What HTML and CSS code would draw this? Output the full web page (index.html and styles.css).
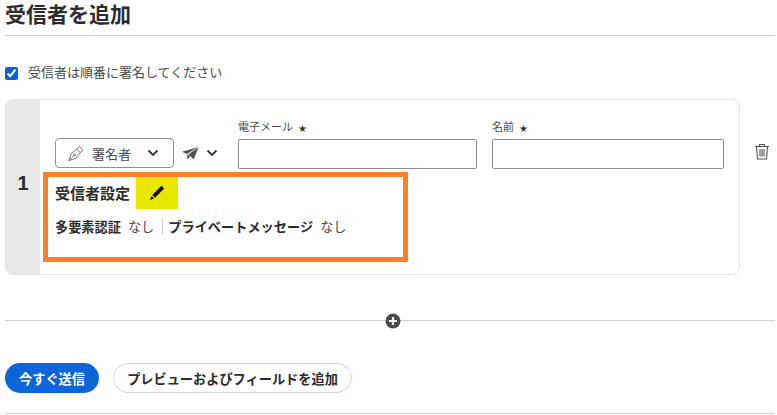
FILE: index.html
```html
<!DOCTYPE html>
<html lang="ja">
<head>
    <meta charset="UTF-8">
    <title>受信者を追加</title>
    <link rel="stylesheet" href="styles.css">
</head>
<body>
    <h1 class="title">受信者を追加</h1>
    <label class="order">
        <input type="checkbox" checked>
        <span>受信者は順番に署名してください</span>
    </label>
    <div class="recipient">
        <div class="card">
            <div class="number">1</div>
            <div class="card-body">
                <div class="fields">
                    <div class="role">
                        <svg class="pen" viewBox="0 0 18 18" width="17" height="17" fill="none" stroke="#707070" stroke-width="1">
                            <path d="M2 16.500l2.500-7.500 6-4.500 3.500 3.500-4.500 6z"/>
                            <path d="M10.500 4.500l2.500-3 4 4-3 2.500"/>
                            <path d="M2 16.500l5-5"/>
                            <circle cx="8" cy="10.500" r="1.100"/>
                        </svg>
                        <span>署名者</span>
                        <svg class="chevron" viewBox="0 0 12 8" width="12" height="8"><path d="M1.500 1.500L6 6l4.500-4.500"/></svg>
                    </div>
                    <div class="delivery">
                        <svg viewBox="0 0 18 16" width="17" height="15" fill="#505050">
                            <path d="M0 6L17.500 1 5 8.500z"/>
                            <path d="M6.500 9L17.500 1.500 12.500 14z"/>
                            <path d="M5 9l1 5.500 2.500-3.500z"/>
                        </svg>
                        <svg class="chevron" viewBox="0 0 12 8" width="12" height="8"><path d="M1.500 1.500L6 6l4.500-4.500"/></svg>
                    </div>
                    <div class="field email">
                        <label>電子メール <b>★</b></label>
                        <input type="text">
                    </div>
                    <div class="field name">
                        <label>名前 <b>★</b></label>
                        <input type="text">
                    </div>
                </div>
                <div class="settings">
                    <div class="settings-head">
                        <strong>受信者設定</strong>
                        <span class="edit">
                            <svg viewBox="0 0 16 16" width="16" height="16" fill="#111">
                                <path d="M12.500.8l2.700 2.700-9.200 9.200-2.700-2.700z"/>
                                <path d="M2.600 11l2.400 2.400-4.100 1.700z"/>
                            </svg>
                        </span>
                    </div>
                    <div class="settings-row">
                        <strong>多要素認証</strong>
                        <span class="value">なし</span>
                        <i class="sep"></i>
                        <strong>プライベートメッセージ</strong>
                        <span class="value">なし</span>
                    </div>
                </div>
            </div>
        </div>
        <svg class="trash" viewBox="0 0 16 17" width="16" height="17" fill="none" stroke="#555" stroke-width="1.100">
            <path d="M1 3.500h14"/>
            <path d="M5.500 3.500V1.500h5v2"/>
            <path d="M2.500 3.500l1 12.500h9l1-12.500"/>
            <path d="M6 6v7.500M8 6v7.500M10 6v7.500"/>
        </svg>
    </div>
    <div class="add-row">
        <span class="add">
            <svg viewBox="0 0 16 16" width="16" height="16">
                <circle cx="8" cy="8" r="7.500" fill="#4b4b4b"/>
                <path d="M8 4v8M4 8h8" stroke="#fff" stroke-width="2.200"/>
            </svg>
        </span>
    </div>
    <div class="actions">
        <button class="primary">今すぐ送信</button>
        <button class="secondary">プレビューおよびフィールドを追加</button>
    </div>
    <div class="bottom-line"></div>
</body>
</html>
```

FILE: styles.css
```css
body {
    font-family: "Noto Sans CJK JP", "Noto Sans", sans-serif;
    color: #2c2c2c;
    background-color: #fff;
    margin: 0;
    padding: 0 2px 0 5px;
    overflow: hidden;
}

.title {
    font-size: 21px;
    line-height: 26px;
    font-weight: 700;
    margin: 0;
    height: 35px;
    border-bottom: 1px solid #d0d0d0;
}

.order {
    display: flex;
    align-items: center;
    gap: 10px;
    margin-top: 28px;
    height: 18px;
    line-height: 16px;
    font-size: 13px;
    color: #4b4b4b;
}

.order span {
    margin-bottom: 2px;
}

.order input {
    width: 13px;
    height: 13px;
    margin: 0;
    accent-color: #0f62d6;
}

.recipient {
    display: flex;
    align-items: flex-start;
    margin-top: 17px;
}

.card {
    display: flex;
    width: 735px;
    height: 176px;
    box-sizing: border-box;
    border: 1px solid #e4e4e4;
    border-radius: 8px;
    overflow: hidden;
}

.number {
    width: 34px;
    flex: none;
    background-color: #e8e8e8;
    font-family: "Liberation Sans", sans-serif;
    font-size: 20px;
    font-weight: 700;
    line-height: 166px;
    text-align: center;
}

.card-body {
    flex: 1;
    padding: 20px 0 0 3px;
}

.fields {
    display: flex;
    align-items: flex-end;
    height: 49px;
    padding-left: 12px;
}

.role {
    display: flex;
    align-items: center;
    width: 119px;
    height: 30px;
    box-sizing: border-box;
    border: 1px solid #909090;
    border-radius: 4px;
    padding: 0 14px 0 11px;
    font-size: 13px;
    color: #4b4b4b;
    margin-bottom: 1px;
}

.role span {
    margin-left: 8px;
    flex: 1;
}

.chevron {
    fill: none;
    stroke: #333;
    stroke-width: 1.800;
}

.delivery {
    display: flex;
    align-items: center;
    gap: 7px;
    width: 64px;
    height: 30px;
    padding-left: 8px;
    box-sizing: border-box;
    margin-bottom: 1px;
}

.field {
    display: flex;
    flex-direction: column;
}

.field label {
    font-size: 11px;
    line-height: 16px;
    color: #4b4b4b;
    margin-bottom: 3px;
}

.field label b {
    margin-left: 3px;
    font-size: 8px;
    color: #333;
}

.field input {
    height: 30px;
    box-sizing: border-box;
    border: 1px solid #8e8e8e;
    border-radius: 2px;
    padding: 0;
    background: #fff;
}

.email {
    width: 239px;
    margin-right: 15px;
}

.name {
    width: 232px;
}

.settings {
    width: 365px;
    height: 90px;
    box-sizing: border-box;
    border: 5px solid #fd7f28;
    margin-top: 3px;
    padding: 0 0 0 7px;
}

.settings-head {
    display: flex;
    align-items: center;
    height: 32px;
    font-size: 15px;
}

.settings-head strong {
    margin-bottom: 2px;
}

.edit {
    display: flex;
    align-items: center;
    justify-content: center;
    width: 42px;
    height: 32px;
    margin-left: 6px;
    background-color: #e9e600;
}

.settings-row {
    display: flex;
    align-items: center;
    margin-top: 5px;
    height: 24px;
    font-size: 13.200px;
}

.settings-row strong {
    font-weight: 700;
}

.value {
    margin-left: 7px;
    color: #4b4b4b;
}

.sep {
    width: 1px;
    height: 16px;
    background-color: #d0d0d0;
    margin: 0 5px 0 8px;
}

.trash {
    margin: 44px 0 0 14px;
}

.add-row {
    display: flex;
    justify-content: center;
    align-items: center;
    height: 1px;
    background-color: #d0d0d0;
    margin-top: 45px;
}

.add {
    display: flex;
    padding: 0 1px;
    margin-left: 6px;
}

.actions {
    display: flex;
    gap: 14px;
    margin-top: 42px;
}

.actions button {
    height: 30px;
    border-radius: 15px;
    font-family: inherit;
    font-size: 13.200px;
    font-weight: 700;
    padding: 0;
    cursor: pointer;
}

.primary {
    width: 94px;
    border: none;
    background-color: #0c66d9;
    color: #fff;
}

.secondary {
    width: 239px;
    border: 1px solid #d5d5d5;
    background-color: #fff;
    color: #2c2c2c;
}

.bottom-line {
    height: 1px;
    background-color: #d0d0d0;
    margin-top: 20px;
}
```
